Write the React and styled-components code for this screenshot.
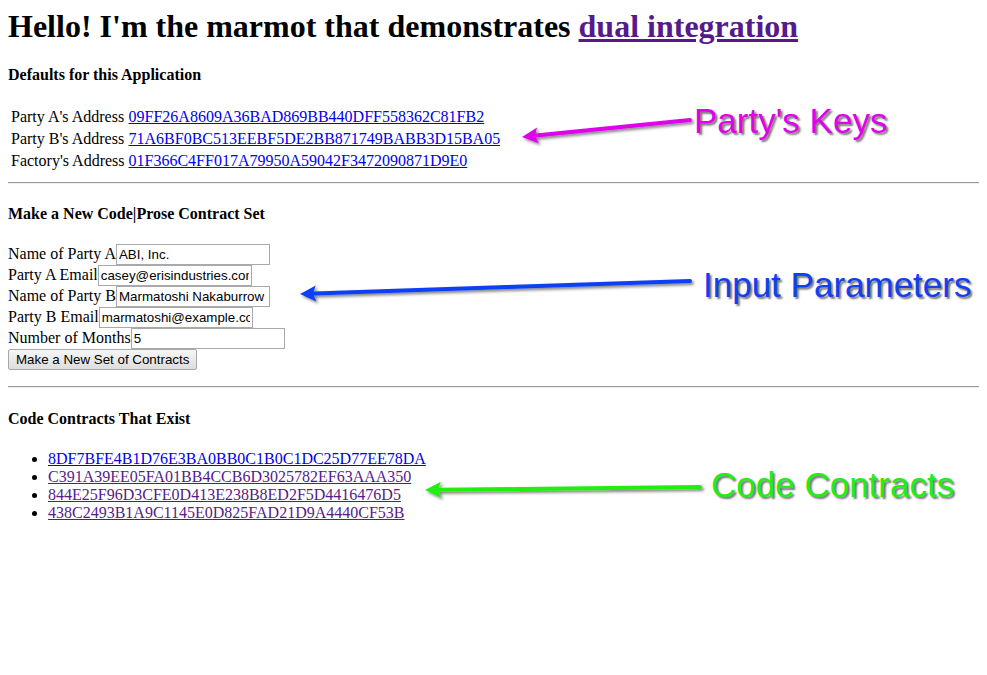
import styled, { createGlobalStyle } from "styled-components";

const GlobalStyle = createGlobalStyle`
  body {
    margin: 8px;
    background: #ffffff;
    color: #000000;
    font-family: "Liberation Serif", "Times New Roman", serif;
    font-size: 16px;
  }
`;

const parties = [
  { label: "Party A's Address", key: "09FF26A8609A36BAD869BB440DFF558362C81FB2" },
  { label: "Party B's Address", key: "71A6BF0BC513EEBF5DE2BB871749BABB3D15BA05" },
  { label: "Factory's Address", key: "01F366C4FF017A79950A59042F3472090871D9E0" },
];

const fields = [
  { label: "Name of Party A", value: "ABI, Inc." },
  { label: "Party A Email", value: "casey@erisindustries.com" },
  { label: "Name of Party B", value: "Marmatoshi Nakaburrow" },
  { label: "Party B Email", value: "marmatoshi@example.com" },
  { label: "Number of Months", value: "5" },
];

const contracts = [
  { id: "8DF7BFE4B1D76E3BA0BB0C1B0C1DC25D77EE78DA", visited: false },
  { id: "C391A39EE05FA01BB4CCB6D3025782EF63AAA350", visited: true },
  { id: "844E25F96D3CFE0D413E238B8ED2F5D4416476D5", visited: true },
  { id: "438C2493B1A9C1145E0D825FAD21D9A4440CF53B", visited: true },
];

// annotation labels + arrows drawn over the page (page coords)
const callouts = [
  { text: "Party's Keys", x: 694, y: 103, color: "#e000ef", from: [690, 120], to: [522, 137] },
  { text: "Input Parameters", x: 703, y: 267, color: "#1040f2", from: [690, 281], to: [300, 294] },
  { text: "Code Contracts", x: 711, y: 467, color: "#22ee11", from: [700, 487], to: [425, 490] },
];

function Arrow({ from, to, color }) {
  const [x1, y1] = from;
  const [x2, y2] = to;
  const len = Math.hypot(x2 - x1, y2 - y1);
  const ux = (x2 - x1) / len;
  const uy = (y2 - y1) / len;
  const bx = x2 - ux * 16;
  const by = y2 - uy * 16;
  const px = -uy * 8;
  const py = ux * 8;
  return (
    <g filter="url(#shadow)">
      <line x1={x1} y1={y1} x2={bx + ux * 2} y2={by + uy * 2} stroke={color} strokeWidth="4" strokeLinecap="round" />
      <polygon points={`${x2},${y2} ${bx + px},${by + py} ${bx + ux * 3},${by + uy * 3} ${bx - px},${by - py}`} fill={color} />
    </g>
  );
}

export default function App() {
  return (
    <Page>
      <GlobalStyle />
      <Title>
        Hello! I'm the marmot that demonstrates <VisitedLink href="#">dual integration</VisitedLink>
      </Title>

      <SectionTitle $first>Defaults for this Application</SectionTitle>
      <KeyTable>
        <tbody>
          {parties.map((p) => (
            <tr key={p.key}>
              <Cell>{p.label}</Cell>
              <Cell>
                <Link href="#">{p.key}</Link>
              </Cell>
            </tr>
          ))}
        </tbody>
      </KeyTable>

      <Rule />

      <SectionTitle>Make a New Code|Prose Contract Set</SectionTitle>
      <Form onSubmit={(e) => e.preventDefault()}>
        {fields.map((f) => (
          <div key={f.label}>
            {f.label}
            <TextInput type="text" defaultValue={f.value} />
          </div>
        ))}
        <Button type="submit">Make a New Set of Contracts</Button>
      </Form>

      <Rule />

      <SectionTitle>Code Contracts That Exist</SectionTitle>
      <ContractList>
        {contracts.map((c) => (
          <li key={c.id}>
            {c.visited ? <VisitedLink href="#">{c.id}</VisitedLink> : <Link href="#">{c.id}</Link>}
          </li>
        ))}
      </ContractList>

      <Overlay width="987" height="675" viewBox="0 0 987 675">
        <defs>
          <filter id="shadow" x="-10%" y="-50%" width="120%" height="200%">
            <feDropShadow dx="2" dy="2" stdDeviation="1.5" floodColor="#000" floodOpacity="0.5" />
          </filter>
        </defs>
        {callouts.map((c) => (
          <Arrow key={c.text} from={c.from} to={c.to} color={c.color} />
        ))}
      </Overlay>
      {callouts.map((c) => (
        <Callout key={c.text} $x={c.x - 8} $y={c.y - 8} $color={c.color}>
          {c.text}
        </Callout>
      ))}
    </Page>
  );
}

const Page = styled.div`
  position: relative;
  line-height: normal;
`;

const Title = styled.h1`
  font-size: 32px;
  font-weight: bold;
  margin: 0;
`;

const SectionTitle = styled.h4`
  font-size: 16px;
  font-weight: bold;
  margin: ${(p) => (p.$first ? "20.5px" : "21.28px")} 0 21.28px;
`;

const Link = styled.a`
  color: #0000ee;
  text-decoration: underline;
`;

const VisitedLink = styled.a`
  color: #551a8b;
  text-decoration: underline;
`;

const KeyTable = styled.table`
  border-spacing: 2px;
  border-collapse: separate;
  margin-top: 1px;
`;

const Cell = styled.td`
  padding: 1px;
  white-space: nowrap;
`;

const Rule = styled.hr`
  width: calc(100% + 8px);
  margin: 9px 0 8px;
  border: none;
  border-top: 1px solid #9a9a9a;
  border-bottom: 1px solid #eeeeee;
  height: 0;
`;

const Form = styled.form`
  margin: 0 0 16px;
`;

const TextInput = styled.input`
  box-sizing: border-box;
  width: 154px;
  height: 21px;
  margin: 0;
  padding: 1px 2px;
  border: 1px solid #a9a9a9;
  border-radius: 0;
  font-family: "Liberation Sans", Arial, sans-serif;
  font-size: 13.33px;
  color: #000;
  background: #fff;
  outline: none;
`;

const Button = styled.button`
  box-sizing: border-box;
  height: 21px;
  margin: 0;
  padding: 1px 7px;
  border: 1px solid #a8a8a8;
  border-radius: 2px;
  background: linear-gradient(#f6f6f6, #dddddd);
  font-family: "Liberation Sans", Arial, sans-serif;
  font-size: 13.33px;
  color: #000;
`;

const ContractList = styled.ul`
  margin: 22.5px 0 16px;
  padding-left: 40px;
  list-style: disc;
`;

const Overlay = styled.svg`
  position: absolute;
  left: -8px;
  top: -8px;
  pointer-events: none;
`;

const Callout = styled.div`
  position: absolute;
  left: ${(p) => p.$x}px;
  top: ${(p) => p.$y}px;
  font-family: "Liberation Sans", Arial, sans-serif;
  font-size: 35px;
  line-height: 35px;
  color: ${(p) => p.$color};
  text-shadow: 2px 2px 2px rgba(0, 0, 0, 0.55);
  white-space: nowrap;
  pointer-events: none;
`;
